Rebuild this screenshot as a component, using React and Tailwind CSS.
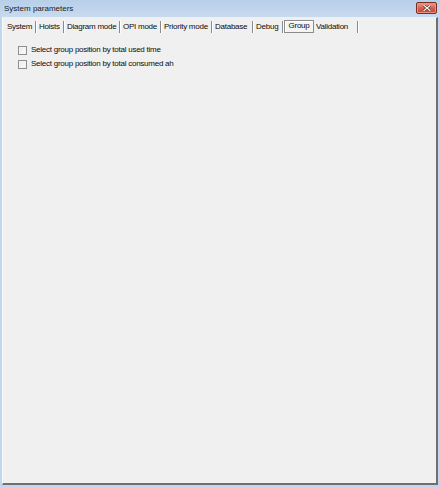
import React from 'react';

const tabs = [
    { label: 'System', w: 'w-[32px]' },
    { label: 'Hoists', w: 'w-[28px]' },
    { label: 'Diagram mode', w: 'w-[56px]' },
    { label: 'OPI mode', w: 'w-[41px]' },
    { label: 'Priority mode', w: 'w-[51px]' },
    { label: 'Database', w: 'w-[41px]' },
    { label: 'Debug', w: 'w-[30px]' },
    { label: 'Group', w: 'w-[30px]', active: true },
    { label: 'Validation', w: 'w-[45px]' },
];

function Separator() {
    return <span className="h-[12px] w-[2px] border-l border-[#8a8a8a] border-r border-r-white" />;
}

function Tab({ label, w, active }) {
    if (active) {
        return (
            <div className={`${w} h-[13px] -mt-[1px] flex items-start justify-center border border-[#8c8c8c] bg-[#f4f4f4] shadow-[inset_1px_1px_0_#ffffff]`}>
                <span className="leading-[10px]">{label}</span>
            </div>
        );
    }
    return (
        <div className={`${w} h-[12px] flex items-center justify-between`}>
            <span className="pl-[2px] leading-[12px] whitespace-nowrap">{label}</span>
            <Separator />
        </div>
    );
}

function Check({ label }) {
    return (
        <div className="flex items-center gap-[4px] h-[14px] leading-[12px]">
            <span className="shrink-0 w-[9px] h-[9px] border border-[#8e8f8f] bg-gradient-to-br from-[#e8e8e8] to-[#ffffff] shadow-[inset_0_0_0_1px_#f4f4f4]" />
            <span className="whitespace-nowrap">{label}</span>
        </div>
    );
}

export default function App() {
    return (
        <div className="w-[440px] h-[487px] bg-[#c2d6ed] flex flex-col text-[#0c0c0c] font-['Liberation_Sans',Arial,sans-serif]">
            {/* title bar */}
            <div className="h-[17px] flex items-center justify-between pl-[4px] pr-[3px] bg-gradient-to-b from-[#b7cfe9] to-[#c8daee]">
                <span className="text-[8px] leading-[10px] text-[#1b1b1b]">System parameters</span>
                <div className="w-[21px] h-[12px] -mt-[2px] rounded-[2px] border border-[#7e2b22] bg-gradient-to-b from-[#e7a194] via-[#d4614f] to-[#c4463a] flex items-center justify-center shadow-[inset_0_0_0_1px_#e9907f]">
                    <svg width="8" height="6" viewBox="0 0 8 6">
                        <path d="M1 0.5 L7 5.5 M7 0.5 L1 5.5" stroke="#5a2a24" strokeWidth="2.4" strokeLinecap="square" />
                        <path d="M1 0.5 L7 5.5 M7 0.5 L1 5.5" stroke="#f4f4f4" strokeWidth="1.3" strokeLinecap="square" />
                    </svg>
                </div>
            </div>

            {/* client area */}
            <div className="flex-1 ml-[2px] mr-[2px] mb-[2px] bg-[#f0f0f0] border-l border-t border-l-[#f8f8f8] border-t-[#f0f0f0] border-r-2 border-b-2 border-r-[#6f6f6f] border-b-[#6f6f6f] text-[8px] tracking-[-0.25px]">
                <div className="flex items-center pl-[2px] pt-[2px] h-[15px]">
                    {tabs.map((t) => (
                        <Tab key={t.label} {...t} />
                    ))}
                </div>

                <div className="pl-[15px] pt-[10px] flex flex-col">
                    <Check label="Select group position by total used time" />
                    <Check label="Select group position by total consumed ah" />
                </div>
            </div>
        </div>
    );
}
